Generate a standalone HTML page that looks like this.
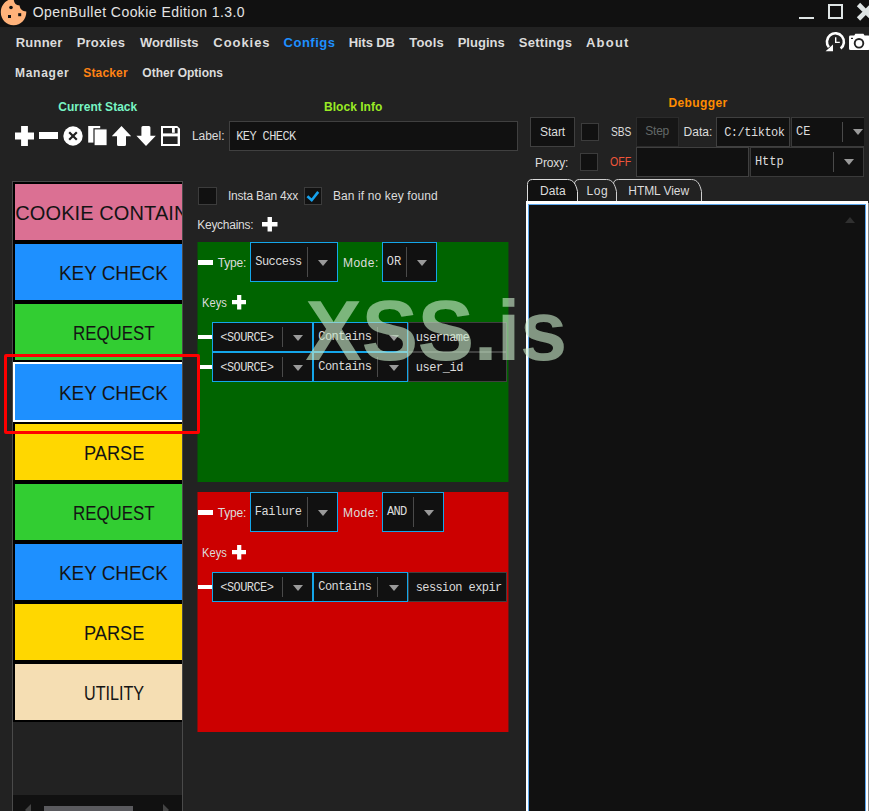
<!DOCTYPE html>
<html lang="en"><head><meta charset="utf-8"><title>OpenBullet Cookie Edition 1.3.0</title>
<style>
html,body{margin:0;padding:0}
body{width:869px;height:811px;overflow:hidden;background:#222;position:relative;font-family:"Liberation Sans",sans-serif;color:#dcdcdc}
#titlebar{position:absolute;left:0;top:0;width:869px;height:27px;background:#111}
div,svg.a,span.t{position:absolute}
#menu,#submenu,#stackpanel,#blockinfo,#debugger{left:0;top:0;width:0;height:0}
.t{white-space:pre;line-height:1}
.s{font-family:"Liberation Sans",sans-serif}
.m{font-family:"Liberation Mono",monospace}
.inp{background:#111;border:1px solid #404040;box-sizing:border-box}
.chk{background:#111;border:1px solid #3c3c3c;box-sizing:border-box}
.cb{background:#111;border:1px solid #3a3a3a;box-sizing:border-box}
.cb.blue{border-color:#14a6ea}
.ta{background:#111;border:2px solid #fff;border-top-width:3px;box-sizing:border-box;box-shadow:inset 1px 1px 0 0 #5aa6ee,inset -1px 0 0 0 #5aa6ee}
.list{background:#222}
</style></head>
<body>
<div id="titlebar">
<svg class="a" style="left:0;top:0" width="30" height="27" viewBox="0 0 30 27"><path d="M13.6 -1.2 C14 3 15.5 5.2 19.6 5.6 C20 9.5 22.5 11.3 26.3 11.6 C26.6 19 21 25.2 13.6 25.2 C6.4 25.2 0.8 19.4 0.8 12.2 C0.8 5 6.4 -1.2 13.6 -1.2Z" fill="#ffb27a"/><circle cx="11" cy="7.5" r="1.8" fill="#111"/><rect x="8" y="15" width="3" height="3" fill="#111"/><rect x="18.2" y="13.2" width="3" height="3" fill="#111"/></svg>
<span class="t s" id="t0" style="left:32.76px;top:5.35px;font-size:14px;color:#e4e4e4;letter-spacing:0.448px;">OpenBullet Cookie Edition 1.3.0</span>
<div class="ln" style="left:799px;top:17px;width:15px;height:2px;background:#dfe5e5"></div>
<div class="ln" style="left:828px;top:4px;width:15px;height:15px;border:2px solid #dfe5e5;box-sizing:border-box"></div>
<svg class="a" style="left:855px;top:2px" width="14" height="20" viewBox="855 2 14 20"><path d="M858.5 4.5L873 19M873 4.5L858.5 19" stroke="#dfe5e5" stroke-width="4.7" fill="none"/></svg>
</div>
<div id="menu">
<span class="t s" id="t1" style="left:15.63px;top:35.70px;font-size:13px;font-weight:700;letter-spacing:0.254px;">Runner</span>
<span class="t s" id="t2" style="left:76.63px;top:35.70px;font-size:13px;font-weight:700;letter-spacing:0.244px;">Proxies</span>
<span class="t s" id="t3" style="left:140.02px;top:35.70px;font-size:13px;font-weight:700;letter-spacing:-0.078px;">Wordlists</span>
<span class="t s" id="t4" style="left:213.30px;top:35.70px;font-size:13px;font-weight:700;letter-spacing:0.953px;">Cookies</span>
<span class="t s" id="t5" style="left:283.60px;top:35.70px;font-size:13px;font-weight:700;color:#1e90ff;letter-spacing:0.487px;">Configs</span>
<span class="t s" id="t6" style="left:348.63px;top:35.70px;font-size:13px;font-weight:700;letter-spacing:-0.108px;">Hits DB</span>
<span class="t s" id="t7" style="left:409.22px;top:35.70px;font-size:13px;font-weight:700;letter-spacing:0.217px;">Tools</span>
<span class="t s" id="t8" style="left:457.63px;top:35.70px;font-size:13px;font-weight:700;letter-spacing:0.044px;">Plugins</span>
<span class="t s" id="t9" style="left:518.71px;top:35.70px;font-size:13px;font-weight:700;letter-spacing:0.281px;">Settings</span>
<span class="t s" id="t10" style="left:585.93px;top:35.70px;font-size:13px;font-weight:700;letter-spacing:1.243px;">About</span>
<svg class="a" style="left:823px;top:30px" width="24" height="24" viewBox="823 30 24 24"><path d="M840.63 48.50 A8.5 8.5 0 1 0 828.89 47.26" stroke="#fff" stroke-width="2.6" fill="none"/><path d="M825.6 51.3H833V44.6Z" fill="#fff"/><path d="M835.7 37.2V42.4H839.8" stroke="#fff" stroke-width="1.4" fill="none"/></svg>
<svg class="a" style="left:848px;top:32px" width="21" height="20" viewBox="848 32 21 20"><path d="M850.5 35.6H854.2L855.4 33.8H863.4L864.6 35.6H868.5Q870 35.6 870 37V48.4Q870 49.9 868.5 49.9H850.5Q849 49.9 849 48.4V37Q849 35.6 850.5 35.6Z" fill="#fff"/><circle cx="859" cy="43.3" r="4.3" fill="#fff" stroke="#222" stroke-width="1.9"/><rect x="851" y="37.8" width="2" height="1.2" fill="#222"/></svg>
</div>
<div id="submenu">
<span class="t s" id="t11" style="left:14.88px;top:66.84px;font-size:12px;font-weight:700;letter-spacing:0.756px;">Manager</span>
<span class="t s" id="t12" style="left:83.34px;top:66.84px;font-size:12px;font-weight:700;color:#ff8214;letter-spacing:0.145px;">Stacker</span>
<span class="t s" id="t13" style="left:142.32px;top:66.84px;font-size:12px;font-weight:700;">Other Options</span>
</div>
<div id="stackpanel">
<span class="t s" id="t14" style="left:58.32px;top:100.54px;font-size:12px;font-weight:700;color:#78f5c4;letter-spacing:0.017px;">Current Stack</span>
<svg class="a" style="left:14.5px;top:126px" width="19" height="20" viewBox="0 0 19 20"><path d="M6.1 0h6.8v6.6h6.1v6.8h-6.1v6.6h-6.8v-6.6h-6.1v-6.8h6.1z" fill="#fff"/></svg>
<div class="ln" style="left:39px;top:132px;width:19px;height:7px;background:#fff"></div>
<svg class="a" style="left:63px;top:126px" width="20" height="20" viewBox="0 0 20 20"><circle cx="10" cy="10" r="9.7" fill="#fff"/><path d="M6.2 6.2L13.8 13.8M13.8 6.2L6.2 13.8" stroke="#222" stroke-width="2.2"/></svg>
<svg class="a" style="left:88px;top:126px" width="19" height="20" viewBox="88 126 19 20"><rect x="88.2" y="126" width="12" height="16.6" fill="#fff"/><rect x="94" y="128.8" width="13.2" height="17" fill="#fff" stroke="#222" stroke-width="1.2"/></svg>
<svg class="a" style="left:112px;top:126px" width="20" height="20" viewBox="112 126 20 20"><path d="M121.5 126L131.2 136.3H126V144.5Q126 146 124.5 146H118.5Q117 146 117 144.5V136.3H111.8Z" fill="#fff"/></svg>
<svg class="a" style="left:136px;top:126px" width="20" height="20" viewBox="136 126 20 20"><path d="M146 146L155.8 135.7H150.4V127.5Q150.4 126 148.9 126H142.9Q141.4 126 141.4 127.5V135.7H136.4Z" fill="#fff"/></svg>
<svg class="a" style="left:160px;top:126px" width="21" height="20" viewBox="160 126 21 20"><path d="M161 126H177.2L180 128.8V146H161Z" fill="#fff"/><rect x="163" y="128" width="14.6" height="5.4" fill="#222"/><rect x="172" y="128" width="2.8" height="4.8" fill="#fff"/><rect x="163" y="136.4" width="14.6" height="7.6" fill="#222"/></svg>
<div class="list" style="left:12px;top:181px;width:171px;height:630px;border:1px solid #4a4a4a;border-bottom:none;box-sizing:border-box;overflow:hidden"><div class="blk" style="left:0;top:0;width:170px;height:540px;background:#000"></div></div>
<div id="blocks" style="left:0;top:0;width:182px;height:811px;overflow:hidden">
<div class="blk" style="left:15px;top:184px;width:167px;height:56px;background:#db7093"></div>
<span class="t s" id="t15" style="left:15.28px;top:202.87px;font-size:20px;color:#141414;letter-spacing:0.101px;">COOKIE CONTAINER</span>
<div class="blk" style="left:15px;top:244px;width:167px;height:56px;background:#1e90ff"></div>
<span class="t s" id="t16" style="left:59.38px;top:262.87px;font-size:20px;color:#141414;transform:scaleX(0.9446);transform-origin:0 0;">KEY CHECK</span>
<div class="blk" style="left:15px;top:304px;width:167px;height:56px;background:#32cd32"></div>
<span class="t s" id="t17" style="left:72.95px;top:322.87px;font-size:20px;color:#141414;transform:scaleX(0.8448);transform-origin:0 0;">REQUEST</span>
<div class="blk" style="left:13px;top:362px;width:202px;height:60px;background:#1e90ff;border:2px solid #fff;box-sizing:border-box"></div>
<span class="t s" id="t18" style="left:59.38px;top:382.87px;font-size:20px;color:#141414;transform:scaleX(0.9446);transform-origin:0 0;">KEY CHECK</span>
<div class="blk" style="left:15px;top:424px;width:167px;height:56px;background:#ffd700"></div>
<span class="t s" id="t19" style="left:84.14px;top:442.87px;font-size:20px;color:#141414;transform:scaleX(0.9105);transform-origin:0 0;">PARSE</span>
<div class="blk" style="left:15px;top:484px;width:167px;height:56px;background:#32cd32"></div>
<span class="t s" id="t20" style="left:72.95px;top:502.87px;font-size:20px;color:#141414;transform:scaleX(0.8448);transform-origin:0 0;">REQUEST</span>
<div class="blk" style="left:15px;top:544px;width:167px;height:56px;background:#1e90ff"></div>
<span class="t s" id="t21" style="left:59.38px;top:562.87px;font-size:20px;color:#141414;transform:scaleX(0.9446);transform-origin:0 0;">KEY CHECK</span>
<div class="blk" style="left:15px;top:604px;width:167px;height:56px;background:#ffd700"></div>
<span class="t s" id="t22" style="left:84.14px;top:622.87px;font-size:20px;color:#141414;transform:scaleX(0.9105);transform-origin:0 0;">PARSE</span>
<div class="blk" style="left:15px;top:664px;width:167px;height:56px;background:#f5deb3"></div>
<span class="t s" id="t23" style="left:84.39px;top:682.87px;font-size:20px;color:#141414;transform:scaleX(0.8075);transform-origin:0 0;">UTILITY</span>
</div>
<div class="ln" style="left:13px;top:795px;width:169px;height:16px;background:#111"></div>
<div class="ln" style="left:44px;top:806px;width:89px;height:5px;background:#5a5a5e"></div>
<svg class="a" style="left:25px;top:804px" width="6" height="7" viewBox="0 0 6 7"><path d="M6 0V12L0 6Z" fill="#444"/></svg>
<svg class="a" style="left:163px;top:804px" width="6" height="7" viewBox="0 0 6 7"><path d="M0 0V12L6 6Z" fill="#444"/></svg>
</div>
<div id="blockinfo">
<span class="t s" id="t24" style="left:324.08px;top:100.54px;font-size:12px;font-weight:700;color:#9aeb25;letter-spacing:0.023px;">Block Info</span>
<span class="t s" id="t25" style="left:191.91px;top:130.14px;font-size:12px;letter-spacing:-0.027px;">Label:</span>
<div class="inp" style="left:229px;top:121px;width:289px;height:30px;"></div>
<span class="t m" id="t26" style="left:236.17px;top:130.80px;font-size:12px;letter-spacing:-0.584px;">KEY CHECK</span>
<div class="chk" style="left:198px;top:187px;width:19px;height:18px;"></div>
<span class="t s" id="t27" style="left:227.89px;top:189.84px;font-size:12px;letter-spacing:-0.188px;">Insta Ban 4xx</span>
<div class="chk" style="left:304px;top:187px;width:18px;height:18px;"><svg width="16" height="16" viewBox="0 0 16 16" style="position:absolute;left:0;top:0"><path d="M2.4 8.3L6.7 12.2L13.2 3.9" stroke="#16a2ee" stroke-width="2.6" fill="none"/></svg></div>
<span class="t s" id="t28" style="left:332.91px;top:189.84px;font-size:12px;letter-spacing:0.118px;">Ban if no key found</span>
<span class="t s" id="t29" style="left:197.29px;top:218.84px;font-size:12px;letter-spacing:-0.279px;">Keychains:</span>
<svg class="a" style="left:262px;top:217px" width="15.5" height="14.5" viewBox="0 0 15.5 14.5"><path d="M5.55 0h4.4v5.05h5.55v4.4h-5.55v5.05h-4.4v-5.05h-5.55v-4.4h5.55z" fill="#fff"/></svg>
<div class="kc" style="left:198px;top:242px;width:310px;height:240px;background:#006400;box-shadow:-1px 0 0 #00640088,1px 0 0 #00640070"></div>
<div class="ln" style="left:198px;top:260px;width:14.5px;height:4.600000000000023px;background:#fff"></div>
<span class="t s" id="t30" style="left:217.73px;top:256.84px;font-size:12px;letter-spacing:-0.183px;">Type:</span>
<div class="cb blue" style="left:250px;top:242px;width:88px;height:40px;"></div><span class="t m" id="t31" style="left:255.31px;top:256.10px;font-size:12px;letter-spacing:-0.571px;">Success</span><div class="ln" style="left:307px;top:247px;width:1px;height:30px;background:#4a4a4a"></div><svg class="a" style="left:317.6px;top:259.5px" width="10" height="6" viewBox="0 0 10 6"><path d="M0 0H10L5.0 6Z" fill="#9a9a9a"/></svg>
<span class="t s" id="t32" style="left:342.91px;top:256.84px;font-size:12px;letter-spacing:0.522px;">Mode:</span>
<div class="cb blue" style="left:382px;top:242px;width:55px;height:40px;"></div><span class="t m" id="t33" style="left:386.72px;top:256.10px;font-size:12px;letter-spacing:0.112px;">OR</span><div class="ln" style="left:406px;top:247px;width:1px;height:30px;background:#4a4a4a"></div><svg class="a" style="left:417px;top:259.5px" width="10" height="6" viewBox="0 0 10 6"><path d="M0 0H10L5.0 6Z" fill="#9a9a9a"/></svg>
<span class="t s" id="t34" style="left:201.87px;top:296.84px;font-size:12px;transform:scaleX(0.9289);transform-origin:0 0;">Keys</span>
<svg class="a" style="left:231.8px;top:295.3px" width="14.4" height="14.4" viewBox="0 0 14.4 14.4"><path d="M5.1 0h4.2v5.1h5.1v4.2h-5.1v5.1h-4.2v-5.1h-5.1v-4.2h5.1z" fill="#fff"/></svg>
<div class="ln" style="left:198px;top:335px;width:14.5px;height:4px;background:#fff"></div>
<div class="cb blue" style="left:212px;top:322px;width:101px;height:30px;"></div><span class="t m" id="t35" style="left:220.36px;top:331.80px;font-size:12px;letter-spacing:-0.584px;">&lt;SOURCE&gt;</span><div class="ln" style="left:282px;top:327px;width:1px;height:20px;background:#4a4a4a"></div><svg class="a" style="left:293.3px;top:334.5px" width="10" height="6" viewBox="0 0 10 6"><path d="M0 0H10L5.0 6Z" fill="#9a9a9a"/></svg>
<div class="cb blue" style="left:313px;top:322px;width:95px;height:30px;"></div><span class="t m" id="t36" style="left:318.36px;top:330.80px;font-size:12px;letter-spacing:-0.582px;">Contains</span><div class="ln" style="left:377px;top:327px;width:1px;height:20px;background:#4a4a4a"></div><svg class="a" style="left:389px;top:334.5px" width="10" height="6" viewBox="0 0 10 6"><path d="M0 0H10L5.0 6Z" fill="#9a9a9a"/></svg>
<div class="inp" style="left:408px;top:322px;width:99px;height:30px;"></div>
<span class="t m" id="t37" style="left:415.79px;top:331.80px;font-size:12px;letter-spacing:-0.525px;">username</span>
<div class="ln" style="left:198px;top:365px;width:14.5px;height:4px;background:#fff"></div>
<div class="cb blue" style="left:212px;top:352px;width:101px;height:30px;"></div><span class="t m" id="t38" style="left:220.36px;top:361.80px;font-size:12px;letter-spacing:-0.584px;">&lt;SOURCE&gt;</span><div class="ln" style="left:282px;top:357px;width:1px;height:20px;background:#4a4a4a"></div><svg class="a" style="left:293.3px;top:364.5px" width="10" height="6" viewBox="0 0 10 6"><path d="M0 0H10L5.0 6Z" fill="#9a9a9a"/></svg>
<div class="cb blue" style="left:313px;top:352px;width:95px;height:30px;"></div><span class="t m" id="t39" style="left:318.36px;top:360.80px;font-size:12px;letter-spacing:-0.582px;">Contains</span><div class="ln" style="left:377px;top:357px;width:1px;height:20px;background:#4a4a4a"></div><svg class="a" style="left:389px;top:364.5px" width="10" height="6" viewBox="0 0 10 6"><path d="M0 0H10L5.0 6Z" fill="#9a9a9a"/></svg>
<div class="inp" style="left:408px;top:352px;width:99px;height:30px;"></div>
<span class="t m" id="t40" style="left:415.79px;top:361.80px;font-size:12px;letter-spacing:-0.466px;">user_id</span>
<div class="kc" style="left:198px;top:492px;width:310px;height:240px;background:#cc0000;box-shadow:-1px 0 0 #cc000088,1px 0 0 #cc000070"></div>
<div class="ln" style="left:198px;top:510px;width:14.5px;height:4.600000000000023px;background:#fff"></div>
<span class="t s" id="t41" style="left:217.73px;top:506.84px;font-size:12px;letter-spacing:-0.183px;">Type:</span>
<div class="cb blue" style="left:250px;top:492px;width:88px;height:40px;"></div><span class="t m" id="t42" style="left:254.82px;top:506.10px;font-size:12px;letter-spacing:-0.527px;">Failure</span><div class="ln" style="left:307px;top:497px;width:1px;height:30px;background:#4a4a4a"></div><svg class="a" style="left:317.6px;top:509.5px" width="10" height="6" viewBox="0 0 10 6"><path d="M0 0H10L5.0 6Z" fill="#9a9a9a"/></svg>
<span class="t s" id="t43" style="left:342.91px;top:506.84px;font-size:12px;letter-spacing:0.522px;">Mode:</span>
<div class="cb blue" style="left:382px;top:492px;width:62px;height:40px;"></div><span class="t m" id="t44" style="left:387.08px;top:506.10px;font-size:12px;letter-spacing:-0.683px;">AND</span><div class="ln" style="left:413px;top:497px;width:1px;height:30px;background:#4a4a4a"></div><svg class="a" style="left:424.3px;top:509.5px" width="10" height="6" viewBox="0 0 10 6"><path d="M0 0H10L5.0 6Z" fill="#9a9a9a"/></svg>
<span class="t s" id="t45" style="left:201.87px;top:546.84px;font-size:12px;transform:scaleX(0.9289);transform-origin:0 0;">Keys</span>
<svg class="a" style="left:231.8px;top:545.3px" width="14.4" height="14.4" viewBox="0 0 14.4 14.4"><path d="M5.1 0h4.2v5.1h5.1v4.2h-5.1v5.1h-4.2v-5.1h-5.1v-4.2h5.1z" fill="#fff"/></svg>
<div class="ln" style="left:198px;top:585px;width:14.5px;height:4px;background:#fff"></div>
<div class="cb blue" style="left:212px;top:572px;width:101px;height:30px;"></div><span class="t m" id="t46" style="left:220.36px;top:581.80px;font-size:12px;letter-spacing:-0.584px;">&lt;SOURCE&gt;</span><div class="ln" style="left:282px;top:577px;width:1px;height:20px;background:#4a4a4a"></div><svg class="a" style="left:293.3px;top:584.5px" width="10" height="6" viewBox="0 0 10 6"><path d="M0 0H10L5.0 6Z" fill="#9a9a9a"/></svg>
<div class="cb blue" style="left:313px;top:572px;width:95px;height:30px;"></div><span class="t m" id="t47" style="left:318.36px;top:580.80px;font-size:12px;letter-spacing:-0.582px;">Contains</span><div class="ln" style="left:377px;top:577px;width:1px;height:20px;background:#4a4a4a"></div><svg class="a" style="left:389px;top:584.5px" width="10" height="6" viewBox="0 0 10 6"><path d="M0 0H10L5.0 6Z" fill="#9a9a9a"/></svg>
<div class="inp" style="left:408px;top:572px;width:99px;height:30px;"></div>
<span class="t m" id="t48" style="left:415.67px;top:581.80px;font-size:12px;letter-spacing:-0.584px;">session expir</span>
</div>
<div id="debugger">
<span class="t s" id="t49" style="left:668.48px;top:96.54px;font-size:12px;font-weight:700;color:#ff8c00;letter-spacing:0.377px;">Debugger</span>
<div class="inp" style="left:530px;top:117px;width:45px;height:30px;"></div>
<span class="t s" id="t50" style="left:540.05px;top:125.84px;font-size:12px;letter-spacing:-0.051px;">Start</span>
<div class="chk" style="left:581px;top:123px;width:18px;height:18px;"></div>
<span class="t s" id="t51" style="left:610.57px;top:125.64px;font-size:12px;transform:scaleX(0.8500);transform-origin:0 0;">SBS</span>
<div class="inp" style="left:636px;top:117px;width:43px;height:30px;background:#161616;border-color:#2b2b2b"></div>
<span class="t s" id="t52" style="left:645.35px;top:125.44px;font-size:12px;color:#626868;letter-spacing:-0.268px;">Step</span>
<span class="t s" id="t53" style="left:683.61px;top:126.44px;font-size:12px;letter-spacing:0.017px;">Data:</span>
<div class="inp" style="left:716px;top:117px;width:74px;height:30px;"></div>
<span class="t m" id="t54" style="left:724.16px;top:127.20px;font-size:12px;letter-spacing:-0.494px;">C:/tiktok</span>
<div class="cb" style="left:791px;top:117px;width:73px;height:30px;border-right:none;"></div><span class="t m" id="t55" style="left:795.96px;top:126.40px;font-size:12px;letter-spacing:0.157px;">CE</span><div class="ln" style="left:842px;top:122px;width:1px;height:20px;background:#4a4a4a"></div><svg class="a" style="left:853px;top:129px" width="10" height="6" viewBox="0 0 10 6"><path d="M0 0H10L5.0 6Z" fill="#9a9a9a"/></svg>
<span class="t s" id="t56" style="left:535.01px;top:156.84px;font-size:12px;letter-spacing:-0.124px;">Proxy:</span>
<div class="chk" style="left:580px;top:153px;width:18px;height:18px;"></div>
<span class="t s" id="t57" style="left:610.42px;top:156.44px;font-size:12px;color:#f0553a;transform:scaleX(0.8845);transform-origin:0 0;">OFF</span>
<div class="inp" style="left:636px;top:147px;width:113px;height:30px;"></div>
<div class="cb" style="left:750px;top:147px;width:114px;height:30px;"></div><span class="t m" id="t58" style="left:754.97px;top:156.30px;font-size:12px;letter-spacing:-0.063px;">Http</span><div class="ln" style="left:833px;top:152px;width:1px;height:20px;background:#4a4a4a"></div><svg class="a" style="left:844px;top:158.7px" width="10" height="6" viewBox="0 0 10 6"><path d="M0 0H10L5.0 6Z" fill="#9a9a9a"/></svg>
<svg class="a" style="left:524px;top:177px" width="182" height="26" viewBox="524 177 182 26"><path d="M613.5 201.5V184.5Q613.5 179.5 618.5 179.5H691.5C697.5 179.5 700.0 184.5 701.5 191.5V201.5" fill="#222" stroke="#cfcfcf" stroke-width="1"/><path d="M574.5 201.5V184.5Q574.5 179.5 579.5 179.5H606.5C612.5 179.5 615.0 184.5 616.5 191.5V201.5" fill="#222" stroke="#cfcfcf" stroke-width="1"/><path d="M527.5 202V184.5Q527.5 179.5 532.5 179.5H567.5C573.5 179.5 576.0 184.5 577.5 191.5V202" fill="#111" stroke="#dcdcdc" stroke-width="1"/></svg>
<span class="t s" id="t59" style="left:540.11px;top:185.14px;font-size:12px;letter-spacing:0.063px;">Data</span>
<span class="t s" id="t60" style="left:586.61px;top:185.14px;font-size:12px;letter-spacing:0.538px;">Log</span>
<span class="t s" id="t61" style="left:628.31px;top:185.14px;font-size:12px;letter-spacing:-0.072px;">HTML View</span>
<div class="ta" style="left:526px;top:201px;width:342px;height:610px;border-bottom:none"></div>
<div class="ln" style="left:868px;top:203px;width:1px;height:608px;background:#8a8a8a"></div>
<svg class="a" style="left:845px;top:217px" width="10" height="6" viewBox="0 0 10 6"><path d="M0 6H10L5 0Z" fill="#303030"/></svg>
</div>
<div class="ann" style="left:4px;top:354px;width:196px;height:80px;border:3px solid #f00;border-radius:2px;box-sizing:border-box"></div>
<span class="t s" id="t62" style="left:305.21px;top:288.25px;font-size:85px;font-weight:700;color:rgba(200,232,200,0.62);letter-spacing:-0.522px;z-index:9;">XSS.is</span>
</body></html>
